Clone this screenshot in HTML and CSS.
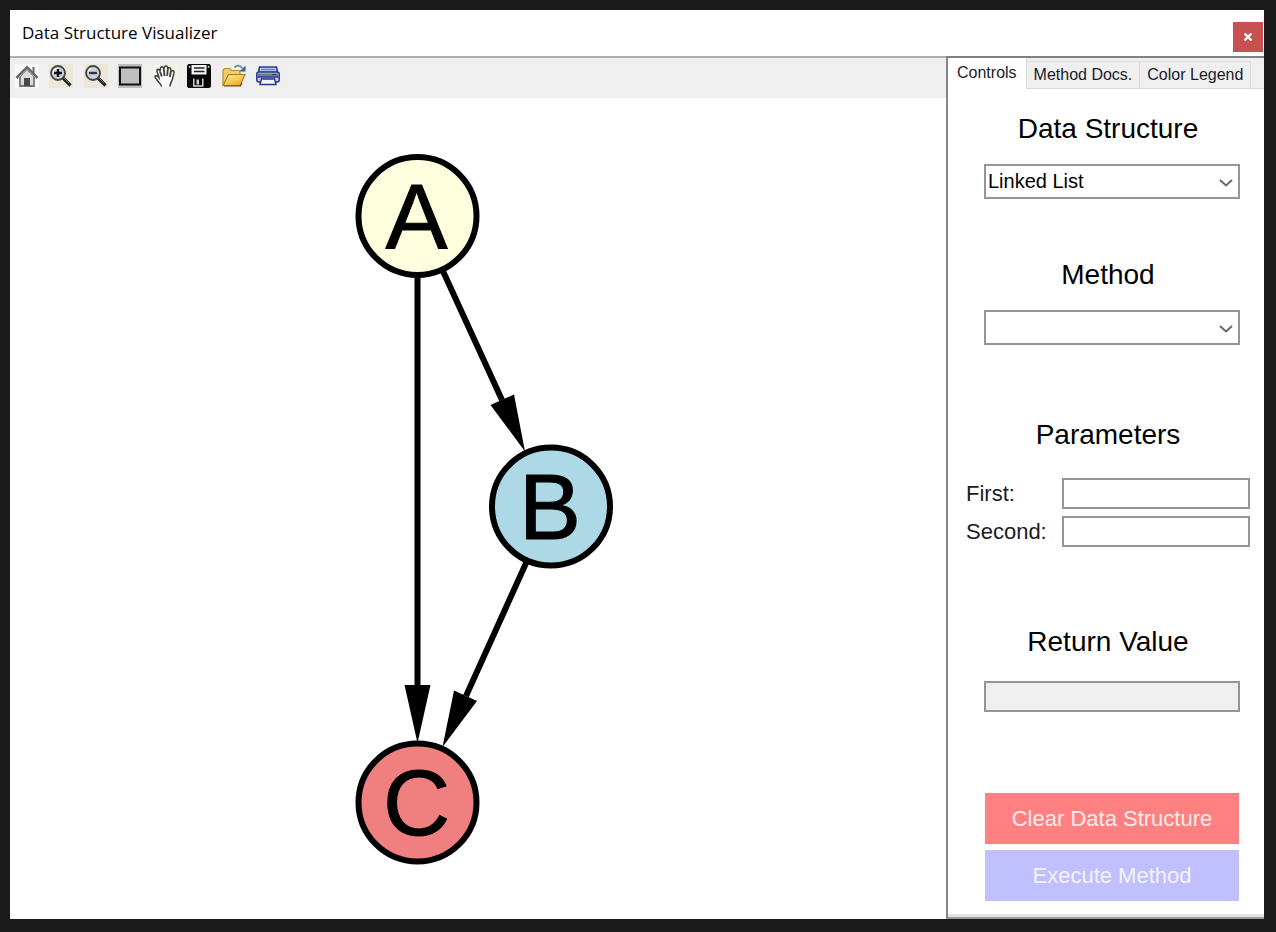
FILE: index.html
```html
<!DOCTYPE html>
<html lang="en">
<head>
<meta charset="utf-8">
<title>Data Structure Visualizer</title>
<link rel="stylesheet" href="styles.css">
</head>
<body>
<div class="window">
  <header class="titlebar">
    <h1 class="titlebar-text">Data Structure Visualizer</h1>
    <button class="close" type="button" aria-label="Close">
      <svg width="10" height="8" viewBox="0 0 10 8"><path d="M1.500 .5 8.500 7.500M8.500 .5 1.500 7.500" stroke="#fff" stroke-width="2.400"/></svg>
    </button>
  </header>
  <div class="workspace">
    <main class="viewer">
      <div class="toolbar">
        <div class="tools" role="toolbar" aria-label="Graph view">
          <button class="tool" type="button" aria-label="Home">
            <svg viewBox="0 0 24 24"><rect width="24" height="24" fill="#fafafa"/><path d="M17.500 3h2V9h-2z" fill="#666"/><path d="M5 12 12 5l7 7v10H5z" fill="#dcdcdc" stroke="#777" stroke-width="1.800"/><path d="M1.500 14 12 3.500 22.500 14" fill="none" stroke="#666" stroke-width="2.800"/><path d="M3.500 13.500 12 5.500l8.500 8" fill="none" stroke="#ccc" stroke-width=".8"/><rect x="9" y="14" width="6" height="8" fill="#484848"/></svg>
          </button>
          <button class="tool" type="button" aria-label="Zoom in">
            <svg viewBox="0 0 24 24"><rect width="24" height="24" fill="#ece8d8"/><path d="m14 14 7.500 7.500" stroke="#222" stroke-width="3.200"/><path d="m15 14 5 5" stroke="#888" stroke-width=".8"/><circle cx="9" cy="9" r="7" fill="#cdd0d8" stroke="#444" stroke-width="1.800"/><path d="M4.500 9a4.500 4.500 0 0 1 4-4.500" fill="none" stroke="#f4f4f8" stroke-width="1.500"/><path d="M5 9h8M9 5v8" stroke="#111" stroke-width="2.400"/></svg>
          </button>
          <button class="tool" type="button" aria-label="Zoom out">
            <svg viewBox="0 0 24 24"><rect width="24" height="24" fill="#ece8d8"/><path d="m14 14 7.500 7.500" stroke="#222" stroke-width="3.200"/><path d="m15 14 5 5" stroke="#888" stroke-width=".8"/><circle cx="9" cy="9" r="7" fill="#cdd0d8" stroke="#444" stroke-width="1.800"/><path d="M4.500 7a4.500 4.500 0 0 1 3-2.500" fill="none" stroke="#f4f4f8" stroke-width="1.500"/><path d="M5 9h8" stroke="#333" stroke-width="2.400"/></svg>
          </button>
          <button class="tool" type="button" aria-label="Zoom to window">
            <svg viewBox="0 0 24 24"><rect width="24" height="24" fill="#bdbdbd"/><rect x="2" y="3.500" width="20" height="17" fill="#bfbfbf" stroke="#111" stroke-width="2"/></svg>
          </button>
          <button class="tool" type="button" aria-label="Pan">
            <svg viewBox="0 0 24 24"><rect width="24" height="24" fill="#f2f1ea"/><path d="M8.500 22.500c-.5-3-3-4-4.500-6.500-1-1.800-2.300-2.300-2-3.500.5-1.400 2.300-.8 4 1.300C5.500 10.500 3.300 7.500 4 6c.8-1.300 2.400-.3 3 1.200C7.200 4.500 7.500 2.800 9 2.800c1.200 0 1.600 1 1.800 2.200.3-2 .9-3 2.200-3 1.400 0 1.700 1.500 1.800 3 .5-1.200 1.500-1.700 2.400-1 1 .8.700 2.500.6 4 .8-1.300 2-1.800 2.900-1 1.300 1.500-.7 4.500-1 7-.3 3-2.700 4.500-2.700 8.500" fill="#fdfdfd" stroke="#3d3d3d" stroke-width="1.500"/><path d="m7 7.500 1.800 5M10.800 5l.7 7M14.800 5l-.6 7M17.800 8l-1 5" fill="none" stroke="#444" stroke-width="1.900"/></svg>
          </button>
          <button class="tool" type="button" aria-label="Save">
            <svg viewBox="0 0 24 24"><path d="M1.500 0h21L24 1.500v21L22.500 24h-21L0 22.500v-21z" fill="#080808"/><path d="M4.500 1h15v9.500h-15z" fill="#f4f4f4"/><path d="M7 4h10.500M7 7.500h10.500" stroke="#222" stroke-width="1.500"/><path d="M1.800 2h1.500v1.800H1.800zM20.800 2h1.500v1.800h-1.500z" fill="#ddd"/><path d="M6.800 14.500v7.500h9V14.500" fill="none" stroke="#ddd" stroke-width="1.400"/><path d="M9.500 15.500h2.500v5H9.500z" fill="#ccc"/></svg>
          </button>
          <button class="tool" type="button" aria-label="Open">
            <svg viewBox="0 0 24 24"><defs><linearGradient id="folder" x2=".7" y2="1"><stop stop-color="#fff0a0"/><stop offset="1" stop-color="#efad20"/></linearGradient></defs><path d="M1 21V6.500l1.500-2h5l2 2H18v4" fill="#f0ce70" stroke="#b88e32" stroke-width="1.200"/><path d="m1 21.500 5.500-11H23l-5 11z" fill="url(#folder)" stroke="#a57c24" stroke-width="1.200"/><path d="M2 22h16.500L20 19" fill="none" stroke="#635021" stroke-width="1.200"/><path d="M12.500 3.500c2-2.800 6-2.500 7.800.8" fill="none" stroke="#6e89aa" stroke-width="1.800"/><path d="M23.500 1.500V7.500H17.500z" fill="#405f91"/></svg>
          </button>
          <button class="tool" type="button" aria-label="Print">
            <svg viewBox="0 0 24 24"><path d="M3.500 3h17l1 5.500h-19z" fill="#b9c8ee" stroke="#2b3c94" stroke-width="1.600"/><path d="M5 5.500h14" stroke="#7185c1" stroke-width="1.300"/><rect x=".8" y="8" width="22.400" height="10" rx="2" fill="#c2cae4" stroke="#26368f" stroke-width="1.500"/><path d="M1.500 9.500h21v3h-21z" fill="#71788e"/><path d="M1.500 13h21" stroke="#26368f" stroke-width="1.500"/><path d="M16 10.500h4" stroke="#343a58"/><path d="m5.500 15-1.500 5.500h16L18.500 15z" fill="#eff5ff" stroke="#26368f" stroke-width="1.400"/></svg>
          </button>
        </div>
      </div>
      <svg class="graph" viewBox="0 0 936 821" role="img" aria-label="Graph with nodes A, B and C">
        <g class="edge">
          <path d="M407.500 178V588M432 171 492 302M517 463 456 598"/>
        </g>
        <g class="arrow">
          <path d="M394.500 587h26l-13 58z"/>
          <path d="M480.500 307 504 296.500 515 353.500z"/>
          <path d="M444 592.500 467 603 432.500 649z"/>
        </g>
        <g class="node">
          <circle class="node-a" cx="407.500" cy="118" r="59"/>
          <circle class="node-b" cx="541" cy="408.500" r="59"/>
          <circle class="node-c" cx="407.500" cy="704.500" r="59"/>
        </g>
        <g class="node-label">
          <text x="406.500" y="150.500">A</text>
          <text x="540" y="440.500">B</text>
          <text x="406.500" y="737">C</text>
        </g>
      </svg>
    </main>
    <aside class="panel">
      <div class="tabs" role="tablist">
        <button class="tab tab-active" type="button" role="tab" aria-selected="true">Controls</button>
        <button class="tab" type="button" role="tab" aria-selected="false">Method Docs.</button>
        <button class="tab" type="button" role="tab" aria-selected="false">Color Legend</button>
      </div>
      <form class="form">
        <section class="group">
          <h2 class="heading"><label for="structure">Data Structure</label></h2>
          <div class="picker">
            <select id="structure" class="box select"><option>Linked List</option></select>
            <svg class="chevron" width="14" height="8" viewBox="0 0 14 8"><path d="m1 1 6 5.500L13 1"/></svg>
          </div>
        </section>
        <section class="group">
          <h2 class="heading"><label for="method">Method</label></h2>
          <div class="picker">
            <select id="method" class="box select"><option></option></select>
            <svg class="chevron" width="14" height="8" viewBox="0 0 14 8"><path d="m1 1 6 5.500L13 1"/></svg>
          </div>
        </section>
        <section class="group group-loose">
          <h2 class="heading">Parameters</h2>
          <div class="params">
            <label for="first">First:</label><input id="first" class="box" type="text">
            <label for="second">Second:</label><input id="second" class="box" type="text">
          </div>
        </section>
        <section class="group group-result">
          <h2 class="heading"><label for="result">Return Value</label></h2>
          <div class="picker"><input id="result" class="box result" type="text" readonly></div>
        </section>
        <div class="actions">
          <button class="action action-clear" type="button">Clear Data Structure</button>
          <button class="action action-run" type="button">Execute Method</button>
        </div>
      </form>
    </aside>
  </div>
</div>
</body>
</html>
```
FILE: styles.css
```css
* { box-sizing: border-box; }

body {
  margin: 0;
  min-height: 100vh;
  padding: 10px 12px 13px 10px;
  display: flex;
  background: #1a1a1a;
  color: #000;
  font-family: "Liberation Sans", Arial, sans-serif;
}

button, input, select { font: inherit; color: inherit; margin: 0; border-radius: 0; }

.window {
  flex: 1;
  min-width: 0;
  display: flex;
  flex-direction: column;
  background: #fff;
}

.titlebar {
  height: 46px;
  padding: 0 1px 0 12px;
  display: flex;
  align-items: center;
  justify-content: space-between;
}

.titlebar-text {
  margin: 0;
  font: 400 17px/48px "Open Sans", "Noto Sans", sans-serif;
}

.close {
  align-self: flex-end;
  width: 30px;
  height: 30px;
  margin-bottom: 4px;
  padding: 0;
  display: grid;
  place-items: center;
  border: 0;
  background: #c75050;
}

.workspace { flex: 1; display: flex; }

.viewer {
  flex: 1;
  min-width: 0;
  display: flex;
  flex-direction: column;
  border-top: 2px solid #b0b0b0;
}

.toolbar {
  height: 40px;
  padding: 6px 5px;
  background: #efefef;
}

.tools {
  max-width: 265px;
  display: flex;
  justify-content: space-between;
}

.tool {
  width: 24px;
  height: 24px;
  padding: 0;
  border: 0;
  background: none;
}

.tool svg { display: block; width: 24px; height: 24px; }

.graph { flex: 1; width: 100%; min-height: 0; display: block; }
.edge { fill: none; stroke: #000; stroke-width: 6; }
.node { stroke: #000; stroke-width: 6; }
.node-a { fill: #ffffe0; }
.node-b { fill: #add8e6; }
.node-c { fill: #f08080; }
.node-label { font-size: 93px; text-anchor: middle; stroke: #000; stroke-width: 1; }

.panel {
  width: 318px;
  display: flex;
  flex-direction: column;
  border-top: 2px solid #808080;
  border-left: 2px solid #868686;
  border-bottom: 2px solid #9a9a9a;
}

.tabs {
  height: 31px;
  display: flex;
  align-items: flex-end;
  background: linear-gradient(#dedede, #dedede) bottom / 100% 1px no-repeat #efefef;
}

.tab {
  height: 28px;
  padding: 0 7px;
  border: 1px solid #dcdcdc;
  border-left: 0;
  background: #efefef;
  font-size: 16px;
  line-height: 26px;
  color: #1a1a2a;
  white-space: nowrap;
}

.tab-active {
  height: 31px;
  padding: 0 9px 2px;
  border-top: 0;
  border-bottom: 0;
  background: #fff;
}

.form {
  flex: 1;
  padding: 24px 14px 13px 18px;
  display: flex;
  flex-direction: column;
  border-bottom: 3px solid #e4e4e4;
}

.group { margin-bottom: 60px; display: grid; gap: 19px; }
.group + .group-loose { margin: 14px 0 79px; gap: 27px; }
.group-result { gap: 23px; }

.heading {
  margin: 0;
  font-size: 28px;
  font-weight: 400;
  line-height: 32px;
  text-align: center;
}

.picker { position: relative; margin: 0 10px 0 18px; }

.box {
  display: block;
  width: 100%;
  height: 31px;
  padding: 0 4px;
  border: 2px solid #959595;
  background: #fff;
  font-size: 20px;
}

.select { height: 35px; padding: 0 24px 2px 2px; appearance: none; }

.chevron {
  position: absolute;
  right: 7px;
  top: 15px;
  fill: none;
  stroke: #666;
  stroke-width: 2;
  pointer-events: none;
}

.result { background: #efefef; }

.params {
  display: grid;
  grid-template-columns: 82px 1fr;
  align-items: center;
  gap: 7px 14px;
  font-size: 22px;
  color: #1c1c24;
}

.actions {
  margin: auto 11px 0 19px;
  display: grid;
  gap: 6px;
}

.action {
  height: 51px;
  padding: 0;
  border: 0;
  font-size: 22px;
}

.action-clear { background: #ff8080; color: #ffecec; }
.action-run { background: #c0c0ff; color: #f3f3ff; }
```
